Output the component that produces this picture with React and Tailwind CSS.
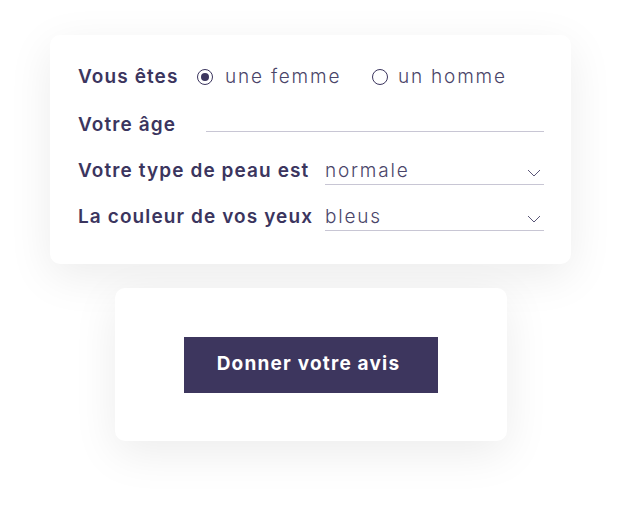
import React from "react";

const Chevron = () => (
  <svg width="14" height="8" viewBox="0 0 14 8" fill="none" className="shrink-0 mt-[12px]">
    <path d="M1 1l6 6 6-6" stroke="#5a5677" strokeWidth="1" />
  </svg>
);

const label = "text-[19px] font-semibold tracking-[1.1px] leading-[28px] text-[#3b355e] whitespace-nowrap";
const value = "text-[19px] font-light tracking-[1.8px] leading-[28px] text-[#4a4569] whitespace-nowrap";

export default function App() {
  return (
    <div className="w-[621px] h-[506px] bg-white pt-[35px] flex flex-col items-center" style={{ fontFamily: "Inter, 'Noto Sans', sans-serif" }}>
      <div className="w-[521px] h-[229px] bg-white rounded-[10px] shadow-[0_12px_45px_rgba(0,0,0,0.08)] pl-[28px] pr-[27px] pt-[28px] flex flex-col">
        <div className="flex items-center h-[28px]">
          <span className={`${label} w-[119px]`}>Vous êtes</span>
          <span className="w-[16px] h-[16px] rounded-full border border-[#3b355e] flex items-center justify-center shrink-0">
            <span className="w-[8px] h-[8px] rounded-full bg-[#3b355e]" />
          </span>
          <span className={`${value} ml-[12px] w-[147px]`}>une femme</span>
          <span className="w-[16px] h-[16px] rounded-full border border-[#3b355e] shrink-0" />
          <span className={`${value} ml-[10px]`}>un homme</span>
        </div>
        <div className="flex items-start h-[26px] mt-[20px]">
          <span className={`${label} w-[128px]`}>Votre âge</span>
          <span className="flex-1 border-b border-[#c8c6d4] h-[21px]" />
        </div>
        <div className="flex items-start h-[28px] mt-[20px]">
          <span className={`${label} w-[247px]`}>Votre type de peau est</span>
          <div className="flex-1 flex items-start justify-between border-b border-[#c8c6d4] h-[28px] pr-[3px]">
            <span className={value}>normale</span>
            <Chevron />
          </div>
        </div>
        <div className="flex items-start h-[28px] mt-[18px]">
          <span className={`${label} w-[247px]`}>La couleur de vos yeux</span>
          <div className="flex-1 flex items-start justify-between border-b border-[#c8c6d4] h-[28px] pr-[3px]">
            <span className={value}>bleus</span>
            <Chevron />
          </div>
        </div>
      </div>
      <div className="mt-[24px] w-[392px] h-[153px] bg-white rounded-[10px] shadow-[0_12px_45px_rgba(0,0,0,0.08)] flex items-center justify-center">
        <button className="w-[254px] h-[56px] bg-[#3d365e] text-white text-[19px] font-bold tracking-[1.2px] pr-[4px]">Donner votre avis</button>
      </div>
    </div>
  );
}
